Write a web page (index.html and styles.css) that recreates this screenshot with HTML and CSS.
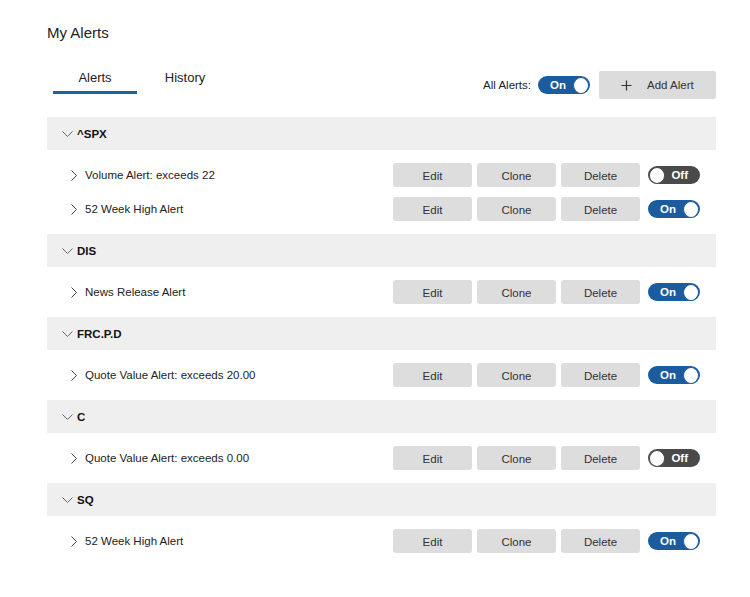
FILE: index.html
```html
<!DOCTYPE html>
<html lang="en">
<head>
<meta charset="utf-8">
<title>My Alerts</title>
<link rel="stylesheet" href="styles.css">
</head>
<body>
<div class="page">
  <h1 class="title">My Alerts</h1>
  <div class="toolbar">
    <div class="tabs">
      <div class="tab active">Alerts</div>
      <div class="tab">History</div>
    </div>
    <div class="controls">
      <span class="all-label">All Alerts:</span>
      <span class="toggle on"><span class="toggle-text">On</span><span class="knob"></span></span>
      <button class="add-btn"><svg class="plus" width="11" height="11" viewBox="0 0 11 11"><path d="M5.5 0.5v10M0.5 5.5h10" stroke="#333" stroke-width="1.2" fill="none"/></svg><span>Add Alert</span></button>
    </div>
  </div>

  <div class="groups">
    <section class="group">
      <div class="group-head"><svg class="chev-down" width="11" height="6" viewBox="0 0 11 6"><path d="M0.5 0.5l5 5 5-5" stroke="#666" stroke-width="1" fill="none"/></svg><span class="sym">^SPX</span></div>
      <div class="group-body">
        <div class="row">
          <svg class="chev-right" width="6" height="11" viewBox="0 0 6 11"><path d="M0.5 0.5l5 5-5 5" stroke="#444" stroke-width="1" fill="none"/></svg>
          <span class="label">Volume Alert: exceeds 22</span>
          <div class="actions"><button class="btn">Edit</button><button class="btn">Clone</button><button class="btn">Delete</button></div>
          <span class="toggle off"><span class="knob"></span><span class="toggle-text">Off</span></span>
        </div>
        <div class="row">
          <svg class="chev-right" width="6" height="11" viewBox="0 0 6 11"><path d="M0.5 0.5l5 5-5 5" stroke="#444" stroke-width="1" fill="none"/></svg>
          <span class="label">52 Week High Alert</span>
          <div class="actions"><button class="btn">Edit</button><button class="btn">Clone</button><button class="btn">Delete</button></div>
          <span class="toggle on"><span class="toggle-text">On</span><span class="knob"></span></span>
        </div>
      </div>
    </section>

    <section class="group">
      <div class="group-head"><svg class="chev-down" width="11" height="6" viewBox="0 0 11 6"><path d="M0.5 0.5l5 5 5-5" stroke="#666" stroke-width="1" fill="none"/></svg><span class="sym">DIS</span></div>
      <div class="group-body">
        <div class="row">
          <svg class="chev-right" width="6" height="11" viewBox="0 0 6 11"><path d="M0.5 0.5l5 5-5 5" stroke="#444" stroke-width="1" fill="none"/></svg>
          <span class="label">News Release Alert</span>
          <div class="actions"><button class="btn">Edit</button><button class="btn">Clone</button><button class="btn">Delete</button></div>
          <span class="toggle on"><span class="toggle-text">On</span><span class="knob"></span></span>
        </div>
      </div>
    </section>

    <section class="group">
      <div class="group-head"><svg class="chev-down" width="11" height="6" viewBox="0 0 11 6"><path d="M0.5 0.5l5 5 5-5" stroke="#666" stroke-width="1" fill="none"/></svg><span class="sym">FRC.P.D</span></div>
      <div class="group-body">
        <div class="row">
          <svg class="chev-right" width="6" height="11" viewBox="0 0 6 11"><path d="M0.5 0.5l5 5-5 5" stroke="#444" stroke-width="1" fill="none"/></svg>
          <span class="label">Quote Value Alert: exceeds 20.00</span>
          <div class="actions"><button class="btn">Edit</button><button class="btn">Clone</button><button class="btn">Delete</button></div>
          <span class="toggle on"><span class="toggle-text">On</span><span class="knob"></span></span>
        </div>
      </div>
    </section>

    <section class="group">
      <div class="group-head"><svg class="chev-down" width="11" height="6" viewBox="0 0 11 6"><path d="M0.5 0.5l5 5 5-5" stroke="#666" stroke-width="1" fill="none"/></svg><span class="sym">C</span></div>
      <div class="group-body">
        <div class="row">
          <svg class="chev-right" width="6" height="11" viewBox="0 0 6 11"><path d="M0.5 0.5l5 5-5 5" stroke="#444" stroke-width="1" fill="none"/></svg>
          <span class="label">Quote Value Alert: exceeds 0.00</span>
          <div class="actions"><button class="btn">Edit</button><button class="btn">Clone</button><button class="btn">Delete</button></div>
          <span class="toggle off"><span class="knob"></span><span class="toggle-text">Off</span></span>
        </div>
      </div>
    </section>

    <section class="group">
      <div class="group-head"><svg class="chev-down" width="11" height="6" viewBox="0 0 11 6"><path d="M0.5 0.5l5 5 5-5" stroke="#666" stroke-width="1" fill="none"/></svg><span class="sym">SQ</span></div>
      <div class="group-body">
        <div class="row">
          <svg class="chev-right" width="6" height="11" viewBox="0 0 6 11"><path d="M0.5 0.5l5 5-5 5" stroke="#444" stroke-width="1" fill="none"/></svg>
          <span class="label">52 Week High Alert</span>
          <div class="actions"><button class="btn">Edit</button><button class="btn">Clone</button><button class="btn">Delete</button></div>
          <span class="toggle on"><span class="toggle-text">On</span><span class="knob"></span></span>
        </div>
      </div>
    </section>
  </div>
</div>
</body>
</html>
```

FILE: styles.css
```css
* { box-sizing: border-box; }
html, body { margin: 0; padding: 0; background: #ffffff; }
body {
  font-family: "Liberation Sans", Arial, sans-serif;
  color: #222222;
}
.page {
  width: 750px;
  padding: 24px 34px 0 47px;
}
.title {
  margin: 0;
  font-size: 15px;
  line-height: 18px;
  font-weight: normal;
  color: #222222;
}
.toolbar {
  display: flex;
  justify-content: space-between;
  align-items: flex-start;
  margin-top: 26px;
}
.tabs {
  display: flex;
  gap: 6px;
  margin-left: 6px;
}
.tab {
  width: 84px;
  text-align: center;
  font-size: 13px;
  line-height: 16px;
  padding-top: 2px;
  padding-bottom: 5px;
  border-bottom: 3px solid transparent;
  color: #222222;
}
.tab.active { border-bottom-color: #1b62a6; }
.controls {
  display: flex;
  align-items: center;
  margin-top: 3px;
}
.all-label {
  font-size: 11.5px;
  color: #222222;
  margin-right: 7px;
}
.add-btn {
  margin-left: 9px;
  width: 117px;
  height: 28px;
  border: none;
  border-radius: 2px;
  background: #dcdcdc;
  font-family: inherit;
  font-size: 11.5px;
  color: #333333;
  display: flex;
  align-items: center;
  padding: 0 0 0 22px;
}
.add-btn .plus { margin-right: 15px; }

.toggle {
  width: 52px;
  height: 18px;
  border-radius: 9px;
  display: inline-flex;
  align-items: center;
  flex-shrink: 0;
  font-size: 11.5px;
  font-weight: bold;
  color: #ffffff;
}
.toggle.on {
  background: #1b5c9e;
  justify-content: flex-end;
  padding: 0 1px 0 12px;
}
.toggle.on .toggle-text { margin-right: 7px; }
.toggle.off {
  background: #4a4a4a;
  padding: 0 12px 0 1px;
}
.toggle.off .toggle-text { margin-left: 6px; }
.knob {
  width: 17px;
  height: 17px;
  border-radius: 50%;
  background: #ffffff;
  border: 1px solid #1b5c9e;
}
.toggle.off .knob { border-color: #4a4a4a; }

.groups { margin-top: 18px; }
.group-head {
  height: 33px;
  background: #efefef;
  display: flex;
  align-items: center;
  padding-left: 15px;
  font-size: 11.5px;
  font-weight: bold;
  color: #111111;
}
.chev-down { margin-right: 4px; }
.group-body { padding: 8px 16px 8px 24px; }
.row {
  height: 34px;
  display: flex;
  align-items: center;
}
.chev-right { margin-right: 8px; flex-shrink: 0; }
.label {
  flex: 1;
  font-size: 11.5px;
  color: #222222;
}
.actions {
  display: flex;
  gap: 5px;
  margin-right: 8px;
}
.btn {
  width: 79px;
  height: 24px;
  border: none;
  border-radius: 3px;
  background: #dddddd;
  font-family: inherit;
  font-size: 11.5px;
  color: #333333;
  padding: 2px 0 0;
}
```
